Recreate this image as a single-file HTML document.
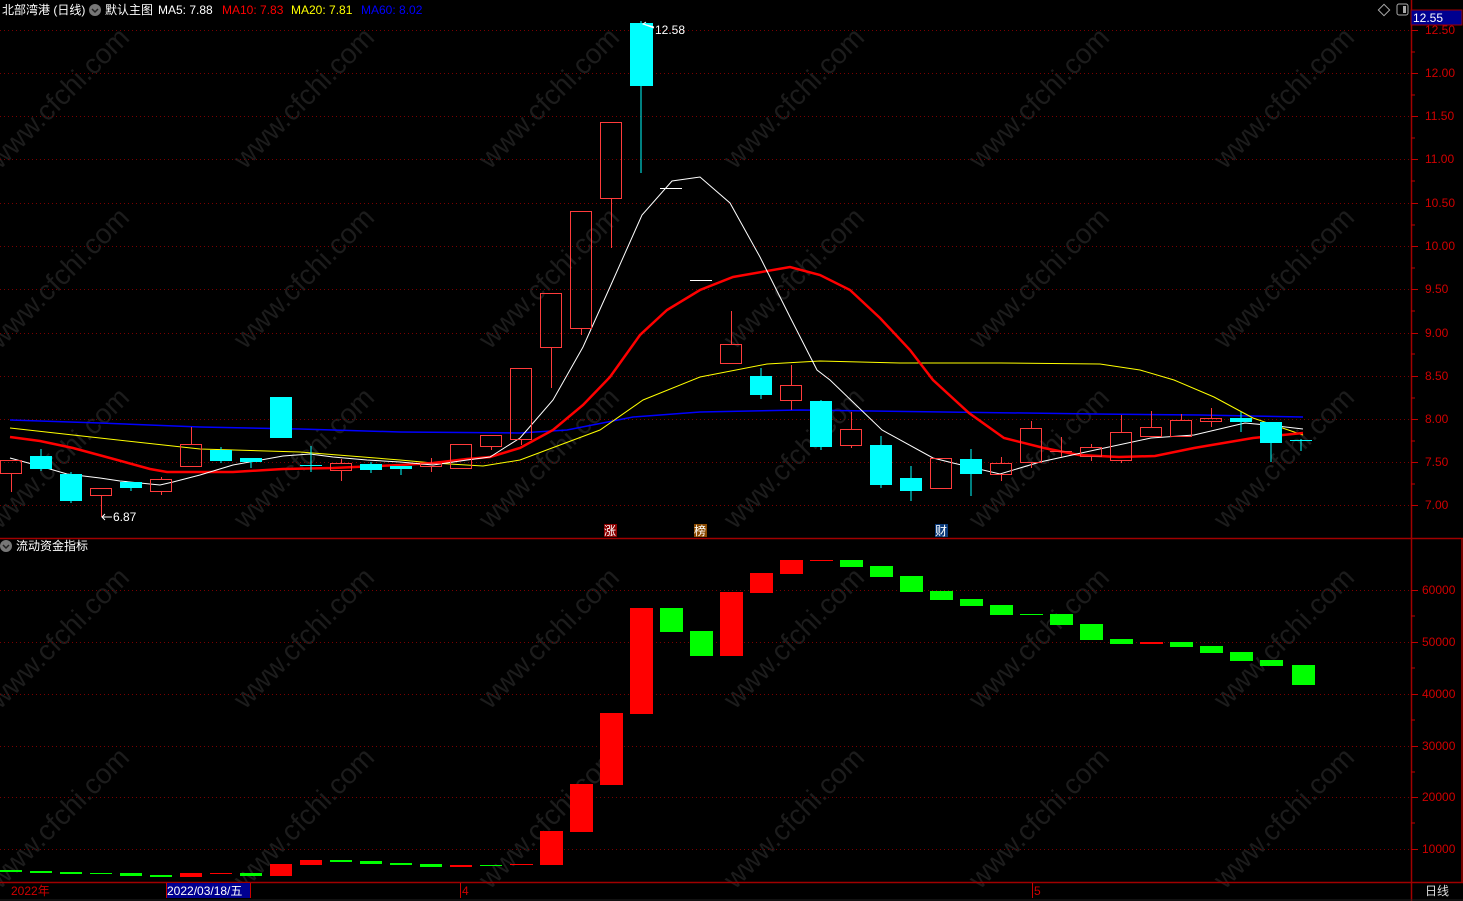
<!DOCTYPE html>
<html><head><meta charset="utf-8"><style>
html,body{margin:0;padding:0;background:#000;width:1463px;height:901px;overflow:hidden}
svg{display:block}
text{font-family:"Liberation Sans","Noto Sans CJK SC",sans-serif}
</style></head><body>
<svg width="1463" height="901" xmlns="http://www.w3.org/2000/svg">
<rect width="1463" height="901" fill="#000"/>
<!-- watermarks -->
<g fill="#1c1c1c" font-size="28" >
<text transform="translate(0,170) rotate(-45)">www.cfchi.com</text>
<text transform="translate(245,170) rotate(-45)">www.cfchi.com</text>
<text transform="translate(490,170) rotate(-45)">www.cfchi.com</text>
<text transform="translate(735,170) rotate(-45)">www.cfchi.com</text>
<text transform="translate(980,170) rotate(-45)">www.cfchi.com</text>
<text transform="translate(1225,170) rotate(-45)">www.cfchi.com</text>
<text transform="translate(0,350) rotate(-45)">www.cfchi.com</text>
<text transform="translate(245,350) rotate(-45)">www.cfchi.com</text>
<text transform="translate(490,350) rotate(-45)">www.cfchi.com</text>
<text transform="translate(735,350) rotate(-45)">www.cfchi.com</text>
<text transform="translate(980,350) rotate(-45)">www.cfchi.com</text>
<text transform="translate(1225,350) rotate(-45)">www.cfchi.com</text>
<text transform="translate(0,530) rotate(-45)">www.cfchi.com</text>
<text transform="translate(245,530) rotate(-45)">www.cfchi.com</text>
<text transform="translate(490,530) rotate(-45)">www.cfchi.com</text>
<text transform="translate(735,530) rotate(-45)">www.cfchi.com</text>
<text transform="translate(980,530) rotate(-45)">www.cfchi.com</text>
<text transform="translate(1225,530) rotate(-45)">www.cfchi.com</text>
<text transform="translate(0,710) rotate(-45)">www.cfchi.com</text>
<text transform="translate(245,710) rotate(-45)">www.cfchi.com</text>
<text transform="translate(490,710) rotate(-45)">www.cfchi.com</text>
<text transform="translate(735,710) rotate(-45)">www.cfchi.com</text>
<text transform="translate(980,710) rotate(-45)">www.cfchi.com</text>
<text transform="translate(1225,710) rotate(-45)">www.cfchi.com</text>
<text transform="translate(0,890) rotate(-45)">www.cfchi.com</text>
<text transform="translate(245,890) rotate(-45)">www.cfchi.com</text>
<text transform="translate(490,890) rotate(-45)">www.cfchi.com</text>
<text transform="translate(735,890) rotate(-45)">www.cfchi.com</text>
<text transform="translate(980,890) rotate(-45)">www.cfchi.com</text>
<text transform="translate(1225,890) rotate(-45)">www.cfchi.com</text>
</g>
<!-- grid -->
<g stroke="#7a0000" stroke-width="1" stroke-dasharray="1,3">
<line x1="0" x2="1411" y1="30.5" y2="30.5"/><line x1="0" x2="1411" y1="73.5" y2="73.5"/>
<line x1="0" x2="1411" y1="116.5" y2="116.5"/><line x1="0" x2="1411" y1="159.5" y2="159.5"/>
<line x1="0" x2="1411" y1="203.5" y2="203.5"/><line x1="0" x2="1411" y1="246.5" y2="246.5"/>
<line x1="0" x2="1411" y1="289.5" y2="289.5"/><line x1="0" x2="1411" y1="333.5" y2="333.5"/>
<line x1="0" x2="1411" y1="376.5" y2="376.5"/><line x1="0" x2="1411" y1="419.5" y2="419.5"/>
<line x1="0" x2="1411" y1="462.5" y2="462.5"/><line x1="0" x2="1411" y1="505.5" y2="505.5"/>
<line x1="0" x2="1411" y1="590.5" y2="590.5"/><line x1="0" x2="1411" y1="642.5" y2="642.5"/>
<line x1="0" x2="1411" y1="694.5" y2="694.5"/><line x1="0" x2="1411" y1="746.5" y2="746.5"/>
<line x1="0" x2="1411" y1="797.5" y2="797.5"/><line x1="0" x2="1411" y1="849.5" y2="849.5"/>
</g>
<!-- frame lines -->
<g stroke="#a00000" stroke-width="1.5">
<line x1="1411.5" y1="0" x2="1411.5" y2="901"/>
<line x1="0" y1="538.5" x2="1463" y2="538.5"/>
<line x1="0" y1="882.5" x2="1463" y2="882.5"/>
<line x1="1462" y1="538" x2="1462" y2="882"/>
</g>
<!-- axis ticks -->
<g stroke="#c00000">
<line x1="1411" x2="1418" y1="30.5" y2="30.5"/><line x1="1411" x2="1418" y1="73.5" y2="73.5"/><line x1="1411" x2="1418" y1="116.5" y2="116.5"/><line x1="1411" x2="1418" y1="159.5" y2="159.5"/><line x1="1411" x2="1418" y1="203.5" y2="203.5"/><line x1="1411" x2="1418" y1="246.5" y2="246.5"/><line x1="1411" x2="1418" y1="289.5" y2="289.5"/><line x1="1411" x2="1418" y1="333.5" y2="333.5"/><line x1="1411" x2="1418" y1="376.5" y2="376.5"/><line x1="1411" x2="1418" y1="419.5" y2="419.5"/><line x1="1411" x2="1418" y1="462.5" y2="462.5"/><line x1="1411" x2="1418" y1="505.5" y2="505.5"/>
<line x1="1411" x2="1415" y1="52" y2="52"/><line x1="1411" x2="1415" y1="95" y2="95"/><line x1="1411" x2="1415" y1="138" y2="138"/><line x1="1411" x2="1415" y1="181" y2="181"/><line x1="1411" x2="1415" y1="225" y2="225"/><line x1="1411" x2="1415" y1="268" y2="268"/><line x1="1411" x2="1415" y1="311" y2="311"/><line x1="1411" x2="1415" y1="354" y2="354"/><line x1="1411" x2="1415" y1="398" y2="398"/><line x1="1411" x2="1415" y1="441" y2="441"/><line x1="1411" x2="1415" y1="484" y2="484"/>
<line x1="1411" x2="1418" y1="590.5" y2="590.5"/><line x1="1411" x2="1418" y1="642.5" y2="642.5"/><line x1="1411" x2="1418" y1="694.5" y2="694.5"/><line x1="1411" x2="1418" y1="746.5" y2="746.5"/><line x1="1411" x2="1418" y1="797.5" y2="797.5"/><line x1="1411" x2="1418" y1="849.5" y2="849.5"/>
<line x1="1411" x2="1415" y1="616" y2="616"/><line x1="1411" x2="1415" y1="668" y2="668"/><line x1="1411" x2="1415" y1="720" y2="720"/><line x1="1411" x2="1415" y1="772" y2="772"/><line x1="1411" x2="1415" y1="823" y2="823"/>
</g>
<g fill="#d00000" font-size="12">
<text x="1425" y="34">12.50</text><text x="1425" y="77">12.00</text><text x="1425" y="120">11.50</text><text x="1425" y="163">11.00</text><text x="1425" y="207">10.50</text><text x="1425" y="250">10.00</text><text x="1425" y="293">9.50</text><text x="1425" y="337">9.00</text><text x="1425" y="380">8.50</text><text x="1425" y="423">8.00</text><text x="1425" y="466">7.50</text><text x="1425" y="509">7.00</text>
<text x="1422" y="594">60000</text><text x="1422" y="646">50000</text><text x="1422" y="698">40000</text><text x="1422" y="750">30000</text><text x="1422" y="801">20000</text><text x="1422" y="853">10000</text>
</g>
<rect x="1411" y="10" width="51" height="15" fill="#000090" stroke="#a00000"/>
<text x="1413" y="22" fill="#fff" font-size="12">12.55</text>

<!-- MA lines -->
<polyline fill="none" stroke="#0000ff" stroke-width="1.5" points="10,420 100,423 200,427 300,429 400,432 520,433 567,430 633,417 700,412 800,410 1095,414 1200,415 1303,417"/>
<polyline fill="none" stroke="#ffff00" stroke-width="1" points="10,428 100,438 200,449 300,452 400,460 433,463 483,466 520,460 560,445 600,430 643,400 700,377 767,364 820,361 900,363 1000,363 1100,364 1140,370 1174,380 1214,397 1253,418 1303,435"/>
<polyline fill="none" stroke="#ff0000" stroke-width="2.5" points="10,437 40,441 73,448 110,458 150,469 167,472 233,472 283,469 333,468 400,465 433,463 467,459 490,457 520,448 553,430 583,405 610,377 640,335 667,310 700,290 733,277 790,267 820,275 850,290 880,318 910,350 933,380 969,413 1004,438 1044,448 1079,455 1119,457 1155,456 1194,448 1253,438 1303,433"/>
<polyline fill="none" stroke="#ffffff" stroke-width="1" points="10,458 43,467 67,474 100,478 120,481 140,483 160,485 173,482 200,475 233,465 283,456 310,454 333,457 367,460 400,462 433,465 467,460 490,457 520,438 527,430 553,400 583,347 610,287 642,215 672,181 700,177 730,203 760,257 790,317 817,370 830,380 882,430 933,458 953,463 1000,474 1040,462 1095,450 1151,438 1194,435 1245,423 1277,426 1303,429"/>

<!-- candles -->
<g fill="none" stroke="#ff3b3b" stroke-width="1">
<rect x="0.5" y="460.5" width="21" height="13"/><line x1="11.5" y1="474" x2="11.5" y2="492"/>
<rect x="90.5" y="488.5" width="21" height="7"/><line x1="101.5" y1="496" x2="101.5" y2="517"/>
<rect x="150.5" y="479.5" width="21" height="12"/><line x1="161.5" y1="477" x2="161.5" y2="479"/><line x1="161.5" y1="492" x2="161.5" y2="495"/>
<rect x="180.5" y="444.5" width="21" height="22"/><line x1="191.5" y1="427" x2="191.5" y2="444"/>
<rect x="330.5" y="463.5" width="21" height="7"/><line x1="341.5" y1="459" x2="341.5" y2="463"/><line x1="341.5" y1="471" x2="341.5" y2="481"/>
<rect x="420.5" y="463.5" width="21" height="3"/><line x1="431.5" y1="458" x2="431.5" y2="463"/><line x1="431.5" y1="467" x2="431.5" y2="472"/>
<rect x="450.5" y="444.5" width="21" height="24"/>
<rect x="480.5" y="435.5" width="21" height="11"/><line x1="491.5" y1="447" x2="491.5" y2="450"/>
<rect x="510.5" y="368.5" width="21" height="71"/><line x1="521.5" y1="440" x2="521.5" y2="445"/>
<rect x="540.5" y="293.5" width="21" height="54"/><line x1="551.5" y1="348" x2="551.5" y2="388"/>
<rect x="570.5" y="211.5" width="21" height="117"/><line x1="581.5" y1="328" x2="581.5" y2="335"/>
<rect x="600.5" y="122.5" width="21" height="76"/><line x1="611.5" y1="198" x2="611.5" y2="248"/>
<rect x="720.5" y="344.5" width="21" height="19"/><line x1="731.5" y1="311" x2="731.5" y2="344"/>
<rect x="780.5" y="385.5" width="21" height="15"/><line x1="791.5" y1="365" x2="791.5" y2="385"/><line x1="791.5" y1="401" x2="791.5" y2="410"/>
<rect x="840.5" y="429.5" width="21" height="16"/><line x1="851.5" y1="412" x2="851.5" y2="429"/><line x1="851.5" y1="446" x2="851.5" y2="448"/>
<rect x="930.5" y="458.5" width="21" height="30"/>
<rect x="990.5" y="463.5" width="21" height="11"/><line x1="1001.5" y1="457" x2="1001.5" y2="463"/><line x1="1001.5" y1="475" x2="1001.5" y2="481"/>
<rect x="1020.5" y="428.5" width="21" height="34"/><line x1="1031.5" y1="421" x2="1031.5" y2="428"/><line x1="1031.5" y1="463" x2="1031.5" y2="468"/>
<line x1="1050" y1="451.5" x2="1072" y2="451.5"/><line x1="1061.5" y1="437" x2="1061.5" y2="457"/>
<rect x="1080.5" y="447.5" width="21" height="9"/><line x1="1091.5" y1="444" x2="1091.5" y2="447"/><line x1="1091.5" y1="457" x2="1091.5" y2="461"/>
<rect x="1110.5" y="432.5" width="21" height="28"/><line x1="1121.5" y1="415" x2="1121.5" y2="432"/><line x1="1121.5" y1="461" x2="1121.5" y2="463"/>
<rect x="1140.5" y="427.5" width="21" height="9"/><line x1="1151.5" y1="411" x2="1151.5" y2="427"/>
<rect x="1170.5" y="420.5" width="21" height="16"/><line x1="1181.5" y1="414" x2="1181.5" y2="420"/>
<rect x="1200.5" y="418.5" width="21" height="3"/><line x1="1211.5" y1="408" x2="1211.5" y2="418"/><line x1="1211.5" y1="422" x2="1211.5" y2="427"/>
</g>
<g fill="#00ffff" stroke="none">
<rect x="30" y="456" width="22" height="13"/><rect x="40.5" y="449" width="1" height="22"/>
<rect x="60" y="474" width="22" height="27"/><rect x="70.5" y="472" width="1" height="31"/>
<rect x="120" y="482" width="22" height="6"/><rect x="130.5" y="482" width="1" height="9"/>
<rect x="210" y="450" width="22" height="11"/><rect x="220.5" y="447" width="1" height="16"/>
<rect x="240" y="458" width="22" height="4"/><rect x="250.5" y="458" width="1" height="10"/>
<rect x="270" y="397" width="22" height="41"/>
<rect x="300" y="465" width="22" height="1"/><rect x="310.5" y="446" width="1" height="26"/>
<rect x="360" y="464" width="22" height="6"/><rect x="370.5" y="462" width="1" height="11"/>
<rect x="390" y="466" width="22" height="3"/><rect x="400.5" y="466" width="1" height="9"/>
<rect x="630" y="23" width="23" height="63"/><rect x="640.5" y="21" width="1" height="152"/>
<rect x="750" y="376" width="22" height="19"/><rect x="760.5" y="368" width="1" height="31"/>
<rect x="810" y="401" width="22" height="46"/><rect x="820.5" y="400" width="1" height="50"/>
<rect x="870" y="445" width="22" height="40"/><rect x="880.5" y="436" width="1" height="52"/>
<rect x="900" y="478" width="22" height="13"/><rect x="910.5" y="466" width="1" height="35"/>
<rect x="960" y="459" width="22" height="15"/><rect x="970.5" y="449" width="1" height="47"/>
<rect x="1230" y="418" width="22" height="4"/><rect x="1240.5" y="412" width="1" height="20"/>
<rect x="1260" y="422" width="22" height="21"/><rect x="1270.5" y="422" width="1" height="40"/>
<rect x="1290" y="440" width="22" height="1"/><rect x="1300.5" y="439" width="1" height="12"/>
</g>
<g stroke="#fff"><line x1="660" y1="188.5" x2="682" y2="188.5"/><line x1="690" y1="280.5" x2="712" y2="280.5"/></g>
<text x="655" y="34" fill="#fff" font-size="12">12.58</text>
<polyline points="654,28 643,24 646,22 M643,24 646,26" fill="none" stroke="#fff"/>
<line x1="654" y1="27" x2="643" y2="24" stroke="#fff"/>
<text x="113" y="521" fill="#fff" font-size="12">6.87</text>
<line x1="102" y1="517" x2="112" y2="517" stroke="#fff"/><polyline points="105,514 102,517 105,520" fill="none" stroke="#fff"/>

<!-- markers -->
<rect x="604" y="524" width="13" height="13" fill="#8a0000"/><text x="604" y="535" fill="#fff" font-size="12">涨</text>
<rect x="694" y="524" width="13" height="13" fill="#8a4a00"/><text x="694" y="535" fill="#fff" font-size="12">榜</text>
<rect x="935" y="524" width="13" height="13" fill="#0a3a7a"/><text x="935" y="535" fill="#fff" font-size="12">财</text>

<!-- indicator bars -->
<g fill="#00ff00">
<rect x="0" y="870" width="22" height="2"/><rect x="30" y="871" width="22" height="2"/><rect x="60" y="872" width="22" height="2"/><rect x="90" y="873" width="22" height="1"/><rect x="120" y="873" width="22" height="3"/><rect x="150" y="875" width="22" height="2"/><rect x="240" y="873" width="22" height="3"/><rect x="330" y="860" width="22" height="2"/><rect x="360" y="861" width="22" height="3"/><rect x="390" y="863" width="22" height="2"/><rect x="420" y="864" width="22" height="3"/><rect x="480" y="865" width="22" height="1"/>
<rect x="660" y="608" width="23" height="24"/><rect x="690" y="631" width="23" height="25"/><rect x="840" y="560" width="23" height="7"/><rect x="870" y="566" width="23" height="11"/><rect x="900" y="576" width="23" height="16"/><rect x="930" y="591" width="23" height="9"/><rect x="960" y="599" width="23" height="7"/><rect x="990" y="605" width="23" height="10"/><rect x="1020" y="614" width="23" height="1"/><rect x="1050" y="614" width="23" height="11"/><rect x="1080" y="624" width="23" height="16"/><rect x="1110" y="639" width="23" height="5"/><rect x="1170" y="642" width="23" height="5"/><rect x="1200" y="646" width="23" height="7"/><rect x="1230" y="652" width="23" height="9"/><rect x="1260" y="660" width="23" height="6"/><rect x="1292" y="665" width="23" height="20"/>
</g>
<g fill="#ff0000">
<rect x="180" y="873" width="22" height="4"/><rect x="210" y="873" width="22" height="1"/><rect x="270" y="864" width="22" height="12"/><rect x="300" y="860" width="22" height="5"/><rect x="450" y="865" width="22" height="2"/><rect x="510" y="864" width="23" height="1"/>
<rect x="540" y="831" width="23" height="34"/><rect x="570" y="784" width="23" height="48"/><rect x="600" y="713" width="23" height="72"/><rect x="630" y="608" width="23" height="106"/><rect x="720" y="592" width="23" height="64"/><rect x="750" y="573" width="23" height="20"/><rect x="780" y="560" width="23" height="14"/><rect x="810" y="560" width="23" height="1"/><rect x="1140" y="642" width="23" height="2"/>
</g>

<!-- headers -->
<g font-size="12">
<text x="2" y="14" fill="#fff">北部湾港 (日线)</text>
<circle cx="95" cy="10" r="6" fill="#777"/><polyline points="92,9 95,12 98,9" fill="none" stroke="#222" stroke-width="1.5"/>
<text x="105" y="14" fill="#fff">默认主图</text>
<text x="158" y="14" fill="#fff">MA5: 7.88</text>
<text x="222" y="14" fill="#ff0000">MA10: 7.83</text>
<text x="291" y="14" fill="#ffff00">MA20: 7.81</text>
<text x="361" y="14" fill="#0000ff">MA60: 8.02</text>
<circle cx="6" cy="546" r="6" fill="#777"/><polyline points="3,545 6,548 9,545" fill="none" stroke="#222" stroke-width="1.5"/>
<text x="16" y="550" fill="#fff">流动资金指标</text>
</g>
<rect x="1380" y="6" width="8" height="8" fill="none" stroke="#aaa" transform="rotate(45 1384 10)"/>
<rect x="1397" y="4" width="11" height="11" rx="2" fill="none" stroke="#aaa"/><rect x="1403" y="6" width="3" height="7" fill="#aaa"/>

<!-- bottom axis -->
<text x="11" y="895" fill="#d00000" font-size="12">2022年</text>
<rect x="166" y="883" width="84" height="15" fill="#000090"/>
<line x1="166.5" y1="883" x2="166.5" y2="898" stroke="#c00"/><line x1="250.5" y1="883" x2="250.5" y2="898" stroke="#c00"/>
<text x="167" y="895" fill="#fff" font-size="12">2022/03/18/五</text>
<line x1="460.5" y1="883" x2="460.5" y2="898" stroke="#c00"/><text x="462" y="895" fill="#d00000" font-size="12">4</text>
<line x1="1032.5" y1="883" x2="1032.5" y2="898" stroke="#c00"/><text x="1034" y="895" fill="#d00000" font-size="12">5</text>
<text x="1425" y="895" fill="#ddd" font-size="12">日线</text>
<line x1="0" y1="900" x2="1463" y2="900" stroke="#222"/>
</svg>
</body></html>
